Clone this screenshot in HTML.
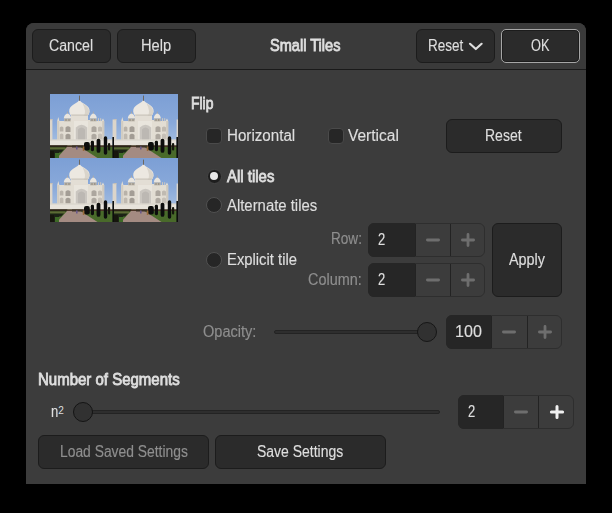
<!DOCTYPE html>
<html><head><meta charset="utf-8"><style>
html,body{margin:0;padding:0;width:612px;height:513px;overflow:hidden;background:#000}
.t{position:absolute;white-space:nowrap;font-family:"Liberation Sans",sans-serif;font-size:15.6px;line-height:20px;transform-origin:0 0}
</style></head><body>
<div style="position:absolute;left:26px;top:23px;width:560px;height:461px;box-sizing:border-box;background:#3c3c3c;border-radius:8px 8px 0 0;"></div>
<div style="position:absolute;left:26px;top:23px;width:560px;height:47px;box-sizing:border-box;background:#3a3a3a;border-radius:8px 8px 0 0;border-bottom:1px solid #1a1a1a;"></div>
<div style="position:absolute;left:32px;top:29px;width:79px;height:34px;box-sizing:border-box;background:#2b2b2b;border:1px solid #1c1c1c;border-radius:6px;"></div>
<div style="position:absolute;left:117px;top:29px;width:79px;height:34px;box-sizing:border-box;background:#2b2b2b;border:1px solid #1c1c1c;border-radius:6px;"></div>
<div style="position:absolute;left:416px;top:29px;width:79px;height:34px;box-sizing:border-box;background:#2b2b2b;border:1px solid #1c1c1c;border-radius:6px;"></div>
<div style="position:absolute;left:501px;top:29px;width:79px;height:34px;box-sizing:border-box;background:#2b2b2b;border:1px solid #a6a6a6;border-radius:5px;box-shadow:inset 0 0 0 1px #1c1c1c;"></div>
<svg style="position:absolute;left:467px;top:41px" width="18" height="11" viewBox="0 0 18 11"><path d="M3 2.8 L8.8 8 L14.6 2.8" fill="none" stroke="#dedede" stroke-width="2.2" stroke-linecap="round" stroke-linejoin="round"/></svg>
<div style="position:absolute;left:446px;top:119px;width:116px;height:34px;box-sizing:border-box;background:#2b2b2b;border:1px solid #1c1c1c;border-radius:6px;"></div>
<div style="position:absolute;left:206px;top:128px;width:16px;height:16px;box-sizing:border-box;background:#262626;border:1px solid #4a4a4a;border-radius:4px;"></div>
<div style="position:absolute;left:328px;top:128px;width:16px;height:16px;box-sizing:border-box;background:#262626;border:1px solid #4a4a4a;border-radius:4px;"></div>
<div style="position:absolute;left:206.5px;top:168.5px;width:15.0px;height:15.0px;box-sizing:border-box;background:#1e1e1e;border:1px solid #454545;border-radius:50%;"></div>
<div style="position:absolute;left:210px;top:172px;width:8px;height:8px;border-radius:50%;background:#e8e8e8"></div>
<div style="position:absolute;left:206px;top:197px;width:16px;height:16px;box-sizing:border-box;background:#262626;border:1px solid #505050;border-radius:50%;"></div>
<div style="position:absolute;left:206px;top:252px;width:16px;height:16px;box-sizing:border-box;background:#262626;border:1px solid #505050;border-radius:50%;"></div>
<div style="position:absolute;left:368px;top:223px;width:117px;height:34px;box-sizing:border-box;background:#3c3c3c;border:1px solid #2e2e2e;border-radius:6px;"></div>
<div style="position:absolute;left:368px;top:223px;width:47px;height:34px;box-sizing:border-box;background:#262626;border-radius:6px 0 0 6px;"></div>
<div style="position:absolute;left:415px;top:224px;width:1px;height:32px;box-sizing:border-box;background:#232323;"></div>
<div style="position:absolute;left:450px;top:224px;width:1px;height:32px;box-sizing:border-box;background:#232323;"></div>
<svg style="position:absolute;left:425.0px;top:232.0px" width="16" height="16"><path d="M2.4 8 H13.6" stroke="#6e6e6e" stroke-width="2.8" stroke-linecap="round"/></svg>
<svg style="position:absolute;left:460.0px;top:232.0px" width="16" height="16"><path d="M2.4 8 H13.6 M8 2.4 V13.6" stroke="#6e6e6e" stroke-width="2.8" stroke-linecap="round"/></svg>
<div style="position:absolute;left:368px;top:263px;width:117px;height:34px;box-sizing:border-box;background:#3c3c3c;border:1px solid #2e2e2e;border-radius:6px;"></div>
<div style="position:absolute;left:368px;top:263px;width:47px;height:34px;box-sizing:border-box;background:#262626;border-radius:6px 0 0 6px;"></div>
<div style="position:absolute;left:415px;top:264px;width:1px;height:32px;box-sizing:border-box;background:#232323;"></div>
<div style="position:absolute;left:450px;top:264px;width:1px;height:32px;box-sizing:border-box;background:#232323;"></div>
<svg style="position:absolute;left:425.0px;top:272.0px" width="16" height="16"><path d="M2.4 8 H13.6" stroke="#6e6e6e" stroke-width="2.8" stroke-linecap="round"/></svg>
<svg style="position:absolute;left:460.0px;top:272.0px" width="16" height="16"><path d="M2.4 8 H13.6 M8 2.4 V13.6" stroke="#6e6e6e" stroke-width="2.8" stroke-linecap="round"/></svg>
<div style="position:absolute;left:446px;top:315px;width:116px;height:34px;box-sizing:border-box;background:#3c3c3c;border:1px solid #2e2e2e;border-radius:6px;"></div>
<div style="position:absolute;left:446px;top:315px;width:44.5px;height:34px;box-sizing:border-box;background:#262626;border-radius:6px 0 0 6px;"></div>
<div style="position:absolute;left:490.5px;top:316px;width:1.0px;height:32px;box-sizing:border-box;background:#232323;"></div>
<div style="position:absolute;left:527px;top:316px;width:1px;height:32px;box-sizing:border-box;background:#232323;"></div>
<svg style="position:absolute;left:501.25px;top:324.0px" width="16" height="16"><path d="M2.4 8 H13.6" stroke="#6e6e6e" stroke-width="2.8" stroke-linecap="round"/></svg>
<svg style="position:absolute;left:537.0px;top:324.0px" width="16" height="16"><path d="M2.4 8 H13.6 M8 2.4 V13.6" stroke="#6e6e6e" stroke-width="2.8" stroke-linecap="round"/></svg>
<div style="position:absolute;left:458px;top:395px;width:116px;height:34px;box-sizing:border-box;background:#3c3c3c;border:1px solid #2e2e2e;border-radius:6px;"></div>
<div style="position:absolute;left:458px;top:395px;width:45px;height:34px;box-sizing:border-box;background:#262626;border-radius:6px 0 0 6px;"></div>
<div style="position:absolute;left:503px;top:396px;width:1px;height:32px;box-sizing:border-box;background:#232323;"></div>
<div style="position:absolute;left:538px;top:396px;width:1px;height:32px;box-sizing:border-box;background:#232323;"></div>
<svg style="position:absolute;left:513.0px;top:404.0px" width="16" height="16"><path d="M2.4 8 H13.6" stroke="#6e6e6e" stroke-width="2.8" stroke-linecap="round"/></svg>
<svg style="position:absolute;left:548.5px;top:404.0px" width="16" height="16"><path d="M2.4 8 H13.6 M8 2.4 V13.6" stroke="#f0f0f0" stroke-width="3.0" stroke-linecap="round"/></svg>
<div style="position:absolute;left:492px;top:223px;width:70px;height:74px;box-sizing:border-box;background:#2b2b2b;border:1px solid #1c1c1c;border-radius:6px;"></div>
<div style="position:absolute;left:274px;top:330px;width:153px;height:4px;box-sizing:border-box;background:#2e2e2e;border:1px solid #232323;border-radius:2px;"></div>
<div style="position:absolute;left:417px;top:322px;width:20px;height:20px;box-sizing:border-box;background:#313131;border:1.6px solid #161616;border-radius:50%;"></div>
<div style="position:absolute;left:83px;top:410px;width:357px;height:4px;box-sizing:border-box;background:#2e2e2e;border:1px solid #232323;border-radius:2px;"></div>
<div style="position:absolute;left:73px;top:402px;width:20px;height:20px;box-sizing:border-box;background:#313131;border:1.6px solid #141414;border-radius:50%;"></div>
<div style="position:absolute;left:38px;top:435px;width:171px;height:34px;box-sizing:border-box;background:#2b2b2b;border:1px solid #1c1c1c;border-radius:6px;"></div>
<div style="position:absolute;left:215px;top:435px;width:171px;height:34px;box-sizing:border-box;background:#2b2b2b;border:1px solid #1c1c1c;border-radius:6px;"></div>
<svg style="position:absolute;left:50px;top:94px" width="128" height="128" viewBox="0 0 128 128"><defs><linearGradient id="sky" x1="0" y1="0" x2="0" y2="1"><stop offset="0" stop-color="#7c9fd5"/><stop offset="0.45" stop-color="#89a9da"/><stop offset="0.72" stop-color="#a0bbe0"/><stop offset="1" stop-color="#a8c0e2"/></linearGradient><filter id="bl" x="0" y="0" width="1" height="1"><feGaussianBlur stdDeviation="0.45"/></filter></defs><g filter="url(#bl)"><g transform="translate(0 0)">

 <rect x="0" y="0" width="64" height="64" fill="url(#sky)"/>
 <rect x="0" y="25.5" width="2.4" height="21" fill="#dcd5ca"/>
 <rect x="0" y="25" width="2.6" height="1.2" fill="#c8c0b4"/>
 <rect x="62.6" y="25.5" width="1.4" height="21" fill="#dcd5ca"/>
 <path d="M7.2 46 V27 L8.3 23 L9.4 27 H19 V26 H40 V27 H51.5 L53 24.5 L54.2 27 V46 Z" fill="#e2ddd3"/>
 <rect x="7.2" y="27" width="2" height="19" fill="#d2ccc1"/>
 <rect x="52.2" y="27" width="2" height="19" fill="#cfc9be"/>
 <rect x="48" y="24.2" width="1" height="3" fill="#d0c9be"/>
 <rect x="50.2" y="24.2" width="1" height="3" fill="#d0c9be"/>
 <path d="M13.8 24.6 Q13.8 21 17.5 19.2 Q21.2 21 21.2 24.6 Z" fill="#e9e5de"/>
 <rect x="14.2" y="24.4" width="6.6" height="3" fill="#bdb6aa"/>
 <rect x="15.5" y="25" width="1" height="2" fill="#8d877e"/>
 <rect x="18.5" y="25" width="1" height="2" fill="#8d877e"/>
 <rect x="17.1" y="17.6" width="0.8" height="2" fill="#b0a89c"/>
 <path d="M39.8 24.6 Q39.8 21 43.3 19.2 Q46.8 21 46.8 24.6 Z" fill="#e9e5de"/>
 <rect x="40.2" y="24.4" width="6.4" height="3" fill="#bdb6aa"/>
 <rect x="41.5" y="25" width="1" height="2" fill="#8d877e"/>
 <rect x="44.3" y="25" width="1" height="2" fill="#8d877e"/>
 <rect x="42.9" y="17.6" width="0.8" height="2" fill="#b0a89c"/>
 <rect x="21" y="20.5" width="17" height="6" fill="#e3ded5"/>
 <path d="M29.4 6 Q31 8.6 35.2 10.6 Q39.8 13.2 39.6 17.4 Q39.3 20.6 37.4 22 H21.4 Q19.5 20.6 19.2 17.4 Q19 13.2 23.6 10.6 Q27.8 8.6 29.4 6 Z" fill="#ece8e1"/>
 <path d="M32.5 9.2 Q38.8 12.5 39.4 17.4 Q39.2 20.6 37.4 22 H33.5 Q37 18 32.5 9.2 Z" fill="#d9d4cb"/>
 <path d="M21.4 21.8 H37.6 L37.9 20.4 H21.1 Z" fill="#c9c3b9"/>
 <rect x="29" y="1.6" width="0.9" height="5.2" fill="#6a6155"/>
 <rect x="24" y="27" width="14" height="19" fill="#e9e5dd"/>
 <path d="M25.8 45.8 V33.5 Q31.5 27.8 37.2 33.5 V45.8 Z" fill="#cac6c0"/>
 <path d="M28 45.8 V35.5 Q31.5 31.5 35 35.5 V45.8 Z" fill="#bcb8b3"/>
 <path d="M9.8 37.5 V33.5 Q11.6 31.5 13.4 33.5 V37.5 Z" fill="#b8b2a9"/>
 <path d="M9.8 45.5 V40.5 Q11.6 38.5 13.4 40.5 V45.5 Z" fill="#bfb9b0"/>
 <path d="M15.5 38 V33.5 Q18 31 20.5 33.5 V38 Z" fill="#a39d95"/>
 <path d="M15.5 45.5 V41 Q18 38.5 20.5 41 V45.5 Z" fill="#a29c94"/>
 <path d="M41.5 38 V33.5 Q44 31 46.5 33.5 V38 Z" fill="#aca69e"/>
 <path d="M41.5 45.5 V41 Q44 38.5 46.5 41 V45.5 Z" fill="#aea8a0"/>
 <path d="M48 37.5 V33.5 Q50 31.5 52 33.5 V37.5 Z" fill="#c0bab1"/>
 <path d="M48 45.5 V40.5 Q50 38.5 52 40.5 V45.5 Z" fill="#c6c0b7"/>
 <rect x="0" y="45.6" width="62.5" height="7" fill="#e7e3db"/>
 <rect x="0" y="45.6" width="64" height="0.8" fill="#d3cdc2"/>
 <rect x="0" y="51.6" width="64" height="12.4" fill="#486a2c"/>
 <rect x="0" y="51.4" width="64" height="1.6" fill="#4a3428"/>
 <path d="M17 53 H30.5 L47.5 64 H7 Z" fill="#a48b82"/>
 <path d="M0 51.5 H17.5 L16 53.5 H0 Z" fill="#2a2218"/>
 <rect x="0" y="53.5" width="15" height="2" fill="#5b6a34"/>
 <path d="M0 55.5 H14 L11 58.5 H9 V64 H0 Z" fill="#1e2216"/>
 <rect x="0" y="57" width="4" height="7" fill="#15180f"/>
 <rect x="5" y="59" width="4" height="5" fill="#3d6a28"/>
 <rect x="22" y="51.5" width="11" height="2" fill="#3a3028"/>
 <rect x="26" y="52.5" width="1.6" height="3" fill="#6a5a8a"/>
 <rect x="34" y="48" width="5.8" height="8.6" rx="2" fill="#0e100c"/>
 <rect x="40.8" y="46.8" width="3.2" height="10.4" rx="1.4" fill="#0e100c"/>
 <rect x="46.6" y="44.8" width="3.8" height="14" rx="1.9" fill="#0a0c09"/>
 <rect x="53.8" y="42.2" width="3.4" height="18.5" rx="1.7" fill="#0c0e0a"/>
 <rect x="58" y="49" width="2.2" height="7.5" rx="1" fill="#14180f"/>
 <rect x="62.4" y="43" width="1.6" height="21" fill="#0c0e0a"/>
 <rect x="32.8" y="52.5" width="1.6" height="4.5" fill="#9a6a3a"/>
</g><g transform="translate(64 0)">

 <rect x="0" y="0" width="64" height="64" fill="url(#sky)"/>
 <rect x="0" y="25.5" width="2.4" height="21" fill="#dcd5ca"/>
 <rect x="0" y="25" width="2.6" height="1.2" fill="#c8c0b4"/>
 <rect x="62.6" y="25.5" width="1.4" height="21" fill="#dcd5ca"/>
 <path d="M7.2 46 V27 L8.3 23 L9.4 27 H19 V26 H40 V27 H51.5 L53 24.5 L54.2 27 V46 Z" fill="#e2ddd3"/>
 <rect x="7.2" y="27" width="2" height="19" fill="#d2ccc1"/>
 <rect x="52.2" y="27" width="2" height="19" fill="#cfc9be"/>
 <rect x="48" y="24.2" width="1" height="3" fill="#d0c9be"/>
 <rect x="50.2" y="24.2" width="1" height="3" fill="#d0c9be"/>
 <path d="M13.8 24.6 Q13.8 21 17.5 19.2 Q21.2 21 21.2 24.6 Z" fill="#e9e5de"/>
 <rect x="14.2" y="24.4" width="6.6" height="3" fill="#bdb6aa"/>
 <rect x="15.5" y="25" width="1" height="2" fill="#8d877e"/>
 <rect x="18.5" y="25" width="1" height="2" fill="#8d877e"/>
 <rect x="17.1" y="17.6" width="0.8" height="2" fill="#b0a89c"/>
 <path d="M39.8 24.6 Q39.8 21 43.3 19.2 Q46.8 21 46.8 24.6 Z" fill="#e9e5de"/>
 <rect x="40.2" y="24.4" width="6.4" height="3" fill="#bdb6aa"/>
 <rect x="41.5" y="25" width="1" height="2" fill="#8d877e"/>
 <rect x="44.3" y="25" width="1" height="2" fill="#8d877e"/>
 <rect x="42.9" y="17.6" width="0.8" height="2" fill="#b0a89c"/>
 <rect x="21" y="20.5" width="17" height="6" fill="#e3ded5"/>
 <path d="M29.4 6 Q31 8.6 35.2 10.6 Q39.8 13.2 39.6 17.4 Q39.3 20.6 37.4 22 H21.4 Q19.5 20.6 19.2 17.4 Q19 13.2 23.6 10.6 Q27.8 8.6 29.4 6 Z" fill="#ece8e1"/>
 <path d="M32.5 9.2 Q38.8 12.5 39.4 17.4 Q39.2 20.6 37.4 22 H33.5 Q37 18 32.5 9.2 Z" fill="#d9d4cb"/>
 <path d="M21.4 21.8 H37.6 L37.9 20.4 H21.1 Z" fill="#c9c3b9"/>
 <rect x="29" y="1.6" width="0.9" height="5.2" fill="#6a6155"/>
 <rect x="24" y="27" width="14" height="19" fill="#e9e5dd"/>
 <path d="M25.8 45.8 V33.5 Q31.5 27.8 37.2 33.5 V45.8 Z" fill="#cac6c0"/>
 <path d="M28 45.8 V35.5 Q31.5 31.5 35 35.5 V45.8 Z" fill="#bcb8b3"/>
 <path d="M9.8 37.5 V33.5 Q11.6 31.5 13.4 33.5 V37.5 Z" fill="#b8b2a9"/>
 <path d="M9.8 45.5 V40.5 Q11.6 38.5 13.4 40.5 V45.5 Z" fill="#bfb9b0"/>
 <path d="M15.5 38 V33.5 Q18 31 20.5 33.5 V38 Z" fill="#a39d95"/>
 <path d="M15.5 45.5 V41 Q18 38.5 20.5 41 V45.5 Z" fill="#a29c94"/>
 <path d="M41.5 38 V33.5 Q44 31 46.5 33.5 V38 Z" fill="#aca69e"/>
 <path d="M41.5 45.5 V41 Q44 38.5 46.5 41 V45.5 Z" fill="#aea8a0"/>
 <path d="M48 37.5 V33.5 Q50 31.5 52 33.5 V37.5 Z" fill="#c0bab1"/>
 <path d="M48 45.5 V40.5 Q50 38.5 52 40.5 V45.5 Z" fill="#c6c0b7"/>
 <rect x="0" y="45.6" width="62.5" height="7" fill="#e7e3db"/>
 <rect x="0" y="45.6" width="64" height="0.8" fill="#d3cdc2"/>
 <rect x="0" y="51.6" width="64" height="12.4" fill="#486a2c"/>
 <rect x="0" y="51.4" width="64" height="1.6" fill="#4a3428"/>
 <path d="M17 53 H30.5 L47.5 64 H7 Z" fill="#a48b82"/>
 <path d="M0 51.5 H17.5 L16 53.5 H0 Z" fill="#2a2218"/>
 <rect x="0" y="53.5" width="15" height="2" fill="#5b6a34"/>
 <path d="M0 55.5 H14 L11 58.5 H9 V64 H0 Z" fill="#1e2216"/>
 <rect x="0" y="57" width="4" height="7" fill="#15180f"/>
 <rect x="5" y="59" width="4" height="5" fill="#3d6a28"/>
 <rect x="22" y="51.5" width="11" height="2" fill="#3a3028"/>
 <rect x="26" y="52.5" width="1.6" height="3" fill="#6a5a8a"/>
 <rect x="34" y="48" width="5.8" height="8.6" rx="2" fill="#0e100c"/>
 <rect x="40.8" y="46.8" width="3.2" height="10.4" rx="1.4" fill="#0e100c"/>
 <rect x="46.6" y="44.8" width="3.8" height="14" rx="1.9" fill="#0a0c09"/>
 <rect x="53.8" y="42.2" width="3.4" height="18.5" rx="1.7" fill="#0c0e0a"/>
 <rect x="58" y="49" width="2.2" height="7.5" rx="1" fill="#14180f"/>
 <rect x="62.4" y="43" width="1.6" height="21" fill="#0c0e0a"/>
 <rect x="32.8" y="52.5" width="1.6" height="4.5" fill="#9a6a3a"/>
</g><g transform="translate(0 64)">

 <rect x="0" y="0" width="64" height="64" fill="url(#sky)"/>
 <rect x="0" y="25.5" width="2.4" height="21" fill="#dcd5ca"/>
 <rect x="0" y="25" width="2.6" height="1.2" fill="#c8c0b4"/>
 <rect x="62.6" y="25.5" width="1.4" height="21" fill="#dcd5ca"/>
 <path d="M7.2 46 V27 L8.3 23 L9.4 27 H19 V26 H40 V27 H51.5 L53 24.5 L54.2 27 V46 Z" fill="#e2ddd3"/>
 <rect x="7.2" y="27" width="2" height="19" fill="#d2ccc1"/>
 <rect x="52.2" y="27" width="2" height="19" fill="#cfc9be"/>
 <rect x="48" y="24.2" width="1" height="3" fill="#d0c9be"/>
 <rect x="50.2" y="24.2" width="1" height="3" fill="#d0c9be"/>
 <path d="M13.8 24.6 Q13.8 21 17.5 19.2 Q21.2 21 21.2 24.6 Z" fill="#e9e5de"/>
 <rect x="14.2" y="24.4" width="6.6" height="3" fill="#bdb6aa"/>
 <rect x="15.5" y="25" width="1" height="2" fill="#8d877e"/>
 <rect x="18.5" y="25" width="1" height="2" fill="#8d877e"/>
 <rect x="17.1" y="17.6" width="0.8" height="2" fill="#b0a89c"/>
 <path d="M39.8 24.6 Q39.8 21 43.3 19.2 Q46.8 21 46.8 24.6 Z" fill="#e9e5de"/>
 <rect x="40.2" y="24.4" width="6.4" height="3" fill="#bdb6aa"/>
 <rect x="41.5" y="25" width="1" height="2" fill="#8d877e"/>
 <rect x="44.3" y="25" width="1" height="2" fill="#8d877e"/>
 <rect x="42.9" y="17.6" width="0.8" height="2" fill="#b0a89c"/>
 <rect x="21" y="20.5" width="17" height="6" fill="#e3ded5"/>
 <path d="M29.4 6 Q31 8.6 35.2 10.6 Q39.8 13.2 39.6 17.4 Q39.3 20.6 37.4 22 H21.4 Q19.5 20.6 19.2 17.4 Q19 13.2 23.6 10.6 Q27.8 8.6 29.4 6 Z" fill="#ece8e1"/>
 <path d="M32.5 9.2 Q38.8 12.5 39.4 17.4 Q39.2 20.6 37.4 22 H33.5 Q37 18 32.5 9.2 Z" fill="#d9d4cb"/>
 <path d="M21.4 21.8 H37.6 L37.9 20.4 H21.1 Z" fill="#c9c3b9"/>
 <rect x="29" y="1.6" width="0.9" height="5.2" fill="#6a6155"/>
 <rect x="24" y="27" width="14" height="19" fill="#e9e5dd"/>
 <path d="M25.8 45.8 V33.5 Q31.5 27.8 37.2 33.5 V45.8 Z" fill="#cac6c0"/>
 <path d="M28 45.8 V35.5 Q31.5 31.5 35 35.5 V45.8 Z" fill="#bcb8b3"/>
 <path d="M9.8 37.5 V33.5 Q11.6 31.5 13.4 33.5 V37.5 Z" fill="#b8b2a9"/>
 <path d="M9.8 45.5 V40.5 Q11.6 38.5 13.4 40.5 V45.5 Z" fill="#bfb9b0"/>
 <path d="M15.5 38 V33.5 Q18 31 20.5 33.5 V38 Z" fill="#a39d95"/>
 <path d="M15.5 45.5 V41 Q18 38.5 20.5 41 V45.5 Z" fill="#a29c94"/>
 <path d="M41.5 38 V33.5 Q44 31 46.5 33.5 V38 Z" fill="#aca69e"/>
 <path d="M41.5 45.5 V41 Q44 38.5 46.5 41 V45.5 Z" fill="#aea8a0"/>
 <path d="M48 37.5 V33.5 Q50 31.5 52 33.5 V37.5 Z" fill="#c0bab1"/>
 <path d="M48 45.5 V40.5 Q50 38.5 52 40.5 V45.5 Z" fill="#c6c0b7"/>
 <rect x="0" y="45.6" width="62.5" height="7" fill="#e7e3db"/>
 <rect x="0" y="45.6" width="64" height="0.8" fill="#d3cdc2"/>
 <rect x="0" y="51.6" width="64" height="12.4" fill="#486a2c"/>
 <rect x="0" y="51.4" width="64" height="1.6" fill="#4a3428"/>
 <path d="M17 53 H30.5 L47.5 64 H7 Z" fill="#a48b82"/>
 <path d="M0 51.5 H17.5 L16 53.5 H0 Z" fill="#2a2218"/>
 <rect x="0" y="53.5" width="15" height="2" fill="#5b6a34"/>
 <path d="M0 55.5 H14 L11 58.5 H9 V64 H0 Z" fill="#1e2216"/>
 <rect x="0" y="57" width="4" height="7" fill="#15180f"/>
 <rect x="5" y="59" width="4" height="5" fill="#3d6a28"/>
 <rect x="22" y="51.5" width="11" height="2" fill="#3a3028"/>
 <rect x="26" y="52.5" width="1.6" height="3" fill="#6a5a8a"/>
 <rect x="34" y="48" width="5.8" height="8.6" rx="2" fill="#0e100c"/>
 <rect x="40.8" y="46.8" width="3.2" height="10.4" rx="1.4" fill="#0e100c"/>
 <rect x="46.6" y="44.8" width="3.8" height="14" rx="1.9" fill="#0a0c09"/>
 <rect x="53.8" y="42.2" width="3.4" height="18.5" rx="1.7" fill="#0c0e0a"/>
 <rect x="58" y="49" width="2.2" height="7.5" rx="1" fill="#14180f"/>
 <rect x="62.4" y="43" width="1.6" height="21" fill="#0c0e0a"/>
 <rect x="32.8" y="52.5" width="1.6" height="4.5" fill="#9a6a3a"/>
</g><g transform="translate(64 64)">

 <rect x="0" y="0" width="64" height="64" fill="url(#sky)"/>
 <rect x="0" y="25.5" width="2.4" height="21" fill="#dcd5ca"/>
 <rect x="0" y="25" width="2.6" height="1.2" fill="#c8c0b4"/>
 <rect x="62.6" y="25.5" width="1.4" height="21" fill="#dcd5ca"/>
 <path d="M7.2 46 V27 L8.3 23 L9.4 27 H19 V26 H40 V27 H51.5 L53 24.5 L54.2 27 V46 Z" fill="#e2ddd3"/>
 <rect x="7.2" y="27" width="2" height="19" fill="#d2ccc1"/>
 <rect x="52.2" y="27" width="2" height="19" fill="#cfc9be"/>
 <rect x="48" y="24.2" width="1" height="3" fill="#d0c9be"/>
 <rect x="50.2" y="24.2" width="1" height="3" fill="#d0c9be"/>
 <path d="M13.8 24.6 Q13.8 21 17.5 19.2 Q21.2 21 21.2 24.6 Z" fill="#e9e5de"/>
 <rect x="14.2" y="24.4" width="6.6" height="3" fill="#bdb6aa"/>
 <rect x="15.5" y="25" width="1" height="2" fill="#8d877e"/>
 <rect x="18.5" y="25" width="1" height="2" fill="#8d877e"/>
 <rect x="17.1" y="17.6" width="0.8" height="2" fill="#b0a89c"/>
 <path d="M39.8 24.6 Q39.8 21 43.3 19.2 Q46.8 21 46.8 24.6 Z" fill="#e9e5de"/>
 <rect x="40.2" y="24.4" width="6.4" height="3" fill="#bdb6aa"/>
 <rect x="41.5" y="25" width="1" height="2" fill="#8d877e"/>
 <rect x="44.3" y="25" width="1" height="2" fill="#8d877e"/>
 <rect x="42.9" y="17.6" width="0.8" height="2" fill="#b0a89c"/>
 <rect x="21" y="20.5" width="17" height="6" fill="#e3ded5"/>
 <path d="M29.4 6 Q31 8.6 35.2 10.6 Q39.8 13.2 39.6 17.4 Q39.3 20.6 37.4 22 H21.4 Q19.5 20.6 19.2 17.4 Q19 13.2 23.6 10.6 Q27.8 8.6 29.4 6 Z" fill="#ece8e1"/>
 <path d="M32.5 9.2 Q38.8 12.5 39.4 17.4 Q39.2 20.6 37.4 22 H33.5 Q37 18 32.5 9.2 Z" fill="#d9d4cb"/>
 <path d="M21.4 21.8 H37.6 L37.9 20.4 H21.1 Z" fill="#c9c3b9"/>
 <rect x="29" y="1.6" width="0.9" height="5.2" fill="#6a6155"/>
 <rect x="24" y="27" width="14" height="19" fill="#e9e5dd"/>
 <path d="M25.8 45.8 V33.5 Q31.5 27.8 37.2 33.5 V45.8 Z" fill="#cac6c0"/>
 <path d="M28 45.8 V35.5 Q31.5 31.5 35 35.5 V45.8 Z" fill="#bcb8b3"/>
 <path d="M9.8 37.5 V33.5 Q11.6 31.5 13.4 33.5 V37.5 Z" fill="#b8b2a9"/>
 <path d="M9.8 45.5 V40.5 Q11.6 38.5 13.4 40.5 V45.5 Z" fill="#bfb9b0"/>
 <path d="M15.5 38 V33.5 Q18 31 20.5 33.5 V38 Z" fill="#a39d95"/>
 <path d="M15.5 45.5 V41 Q18 38.5 20.5 41 V45.5 Z" fill="#a29c94"/>
 <path d="M41.5 38 V33.5 Q44 31 46.5 33.5 V38 Z" fill="#aca69e"/>
 <path d="M41.5 45.5 V41 Q44 38.5 46.5 41 V45.5 Z" fill="#aea8a0"/>
 <path d="M48 37.5 V33.5 Q50 31.5 52 33.5 V37.5 Z" fill="#c0bab1"/>
 <path d="M48 45.5 V40.5 Q50 38.5 52 40.5 V45.5 Z" fill="#c6c0b7"/>
 <rect x="0" y="45.6" width="62.5" height="7" fill="#e7e3db"/>
 <rect x="0" y="45.6" width="64" height="0.8" fill="#d3cdc2"/>
 <rect x="0" y="51.6" width="64" height="12.4" fill="#486a2c"/>
 <rect x="0" y="51.4" width="64" height="1.6" fill="#4a3428"/>
 <path d="M17 53 H30.5 L47.5 64 H7 Z" fill="#a48b82"/>
 <path d="M0 51.5 H17.5 L16 53.5 H0 Z" fill="#2a2218"/>
 <rect x="0" y="53.5" width="15" height="2" fill="#5b6a34"/>
 <path d="M0 55.5 H14 L11 58.5 H9 V64 H0 Z" fill="#1e2216"/>
 <rect x="0" y="57" width="4" height="7" fill="#15180f"/>
 <rect x="5" y="59" width="4" height="5" fill="#3d6a28"/>
 <rect x="22" y="51.5" width="11" height="2" fill="#3a3028"/>
 <rect x="26" y="52.5" width="1.6" height="3" fill="#6a5a8a"/>
 <rect x="34" y="48" width="5.8" height="8.6" rx="2" fill="#0e100c"/>
 <rect x="40.8" y="46.8" width="3.2" height="10.4" rx="1.4" fill="#0e100c"/>
 <rect x="46.6" y="44.8" width="3.8" height="14" rx="1.9" fill="#0a0c09"/>
 <rect x="53.8" y="42.2" width="3.4" height="18.5" rx="1.7" fill="#0c0e0a"/>
 <rect x="58" y="49" width="2.2" height="7.5" rx="1" fill="#14180f"/>
 <rect x="62.4" y="43" width="1.6" height="21" fill="#0c0e0a"/>
 <rect x="32.8" y="52.5" width="1.6" height="4.5" fill="#9a6a3a"/>
</g></g></svg>
<div class="t" style="left:49.40px;top:35.60px;font-weight:normal;-webkit-text-stroke:0.15px #dedede;color:#dedede;transform:scaleX(0.9083)">Cancel</div>
<div class="t" style="left:141.40px;top:35.60px;font-weight:normal;-webkit-text-stroke:0.15px #dedede;color:#dedede;transform:scaleX(0.9406)">Help</div>
<div class="t" style="left:270.30px;top:35.60px;font-weight:normal;-webkit-text-stroke:0.8px #dedede;color:#dedede;transform:scaleX(0.9342)">Small Tiles</div>
<div class="t" style="left:428.00px;top:36.00px;font-weight:normal;-webkit-text-stroke:0.15px #dedede;color:#dedede;transform:scaleX(0.8659)">Reset</div>
<div class="t" style="left:530.50px;top:36.00px;font-weight:normal;-webkit-text-stroke:0.15px #dedede;color:#dedede;transform:scaleX(0.8174)">OK</div>
<div class="t" style="left:191.00px;top:93.60px;font-weight:normal;-webkit-text-stroke:0.8px #dedede;color:#dedede;transform:scaleX(0.8923)">Flip</div>
<div class="t" style="left:226.70px;top:125.60px;font-weight:normal;-webkit-text-stroke:0.15px #dedede;color:#dedede;transform:scaleX(0.9714)">Horizontal</div>
<div class="t" style="left:348.10px;top:126.00px;font-weight:normal;-webkit-text-stroke:0.15px #dedede;color:#dedede;transform:scaleX(0.9941)">Vertical</div>
<div class="t" style="left:485.20px;top:125.80px;font-weight:normal;-webkit-text-stroke:0.15px #dedede;color:#dedede;transform:scaleX(0.8976)">Reset</div>
<div class="t" style="left:227.46px;top:166.90px;font-weight:normal;-webkit-text-stroke:0.8px #dedede;color:#dedede;transform:scaleX(0.9588)">All tiles</div>
<div class="t" style="left:226.50px;top:195.60px;font-weight:normal;-webkit-text-stroke:0.15px #dedede;color:#dedede;transform:scaleX(0.9547)">Alternate tiles</div>
<div class="t" style="left:226.90px;top:249.70px;font-weight:normal;-webkit-text-stroke:0.15px #dedede;color:#dedede;transform:scaleX(0.9500)">Explicit tile</div>
<div class="t" style="left:330.50px;top:229.40px;font-weight:normal;-webkit-text-stroke:0.15px #8e8e8e;color:#8e8e8e;transform:scaleX(0.8714)">Row:</div>
<div class="t" style="left:308.30px;top:269.70px;font-weight:normal;-webkit-text-stroke:0.15px #8e8e8e;color:#8e8e8e;transform:scaleX(0.9246)">Column:</div>
<div class="t" style="left:509.30px;top:249.80px;font-weight:normal;-webkit-text-stroke:0.15px #dedede;color:#dedede;transform:scaleX(0.9231)">Apply</div>
<div class="t" style="left:378.00px;top:230.00px;font-weight:normal;-webkit-text-stroke:0.15px #dedede;color:#dedede;transform:scaleX(0.8333)">2</div>
<div class="t" style="left:378.00px;top:270.00px;font-weight:normal;-webkit-text-stroke:0.15px #dedede;color:#dedede;transform:scaleX(0.8333)">2</div>
<div class="t" style="left:202.70px;top:321.90px;font-weight:normal;-webkit-text-stroke:0.15px #8e8e8e;color:#8e8e8e;transform:scaleX(0.9339)">Opacity:</div>
<div class="t" style="left:454.57px;top:321.60px;font-weight:normal;-webkit-text-stroke:0.15px #dedede;color:#dedede;transform:scaleX(1.0320)">100</div>
<div class="t" style="left:38.30px;top:370.30px;font-weight:normal;-webkit-text-stroke:0.8px #dedede;color:#dedede;transform:scaleX(0.9615)">Number of Segments</div>
<div class="t" style="left:50.50px;top:402.20px;font-weight:normal;-webkit-text-stroke:0.15px #dedede;color:#dedede;transform:scaleX(0.8375)">n</div>
<div class="t" style="left:467.80px;top:402.00px;font-weight:normal;-webkit-text-stroke:0.15px #dedede;color:#dedede;transform:scaleX(0.8333)">2</div>
<div class="t" style="left:59.50px;top:441.60px;font-weight:normal;-webkit-text-stroke:0.15px #8e8e8e;color:#8e8e8e;transform:scaleX(0.8882)">Load Saved Settings</div>
<div class="t" style="left:257.20px;top:441.60px;font-weight:normal;-webkit-text-stroke:0.15px #dedede;color:#dedede;transform:scaleX(0.8958)">Save Settings</div>
<div class="t" style="left:58.2px;top:403.5px;font-size:10px;line-height:14px;color:#dedede">2</div>
</body></html>
